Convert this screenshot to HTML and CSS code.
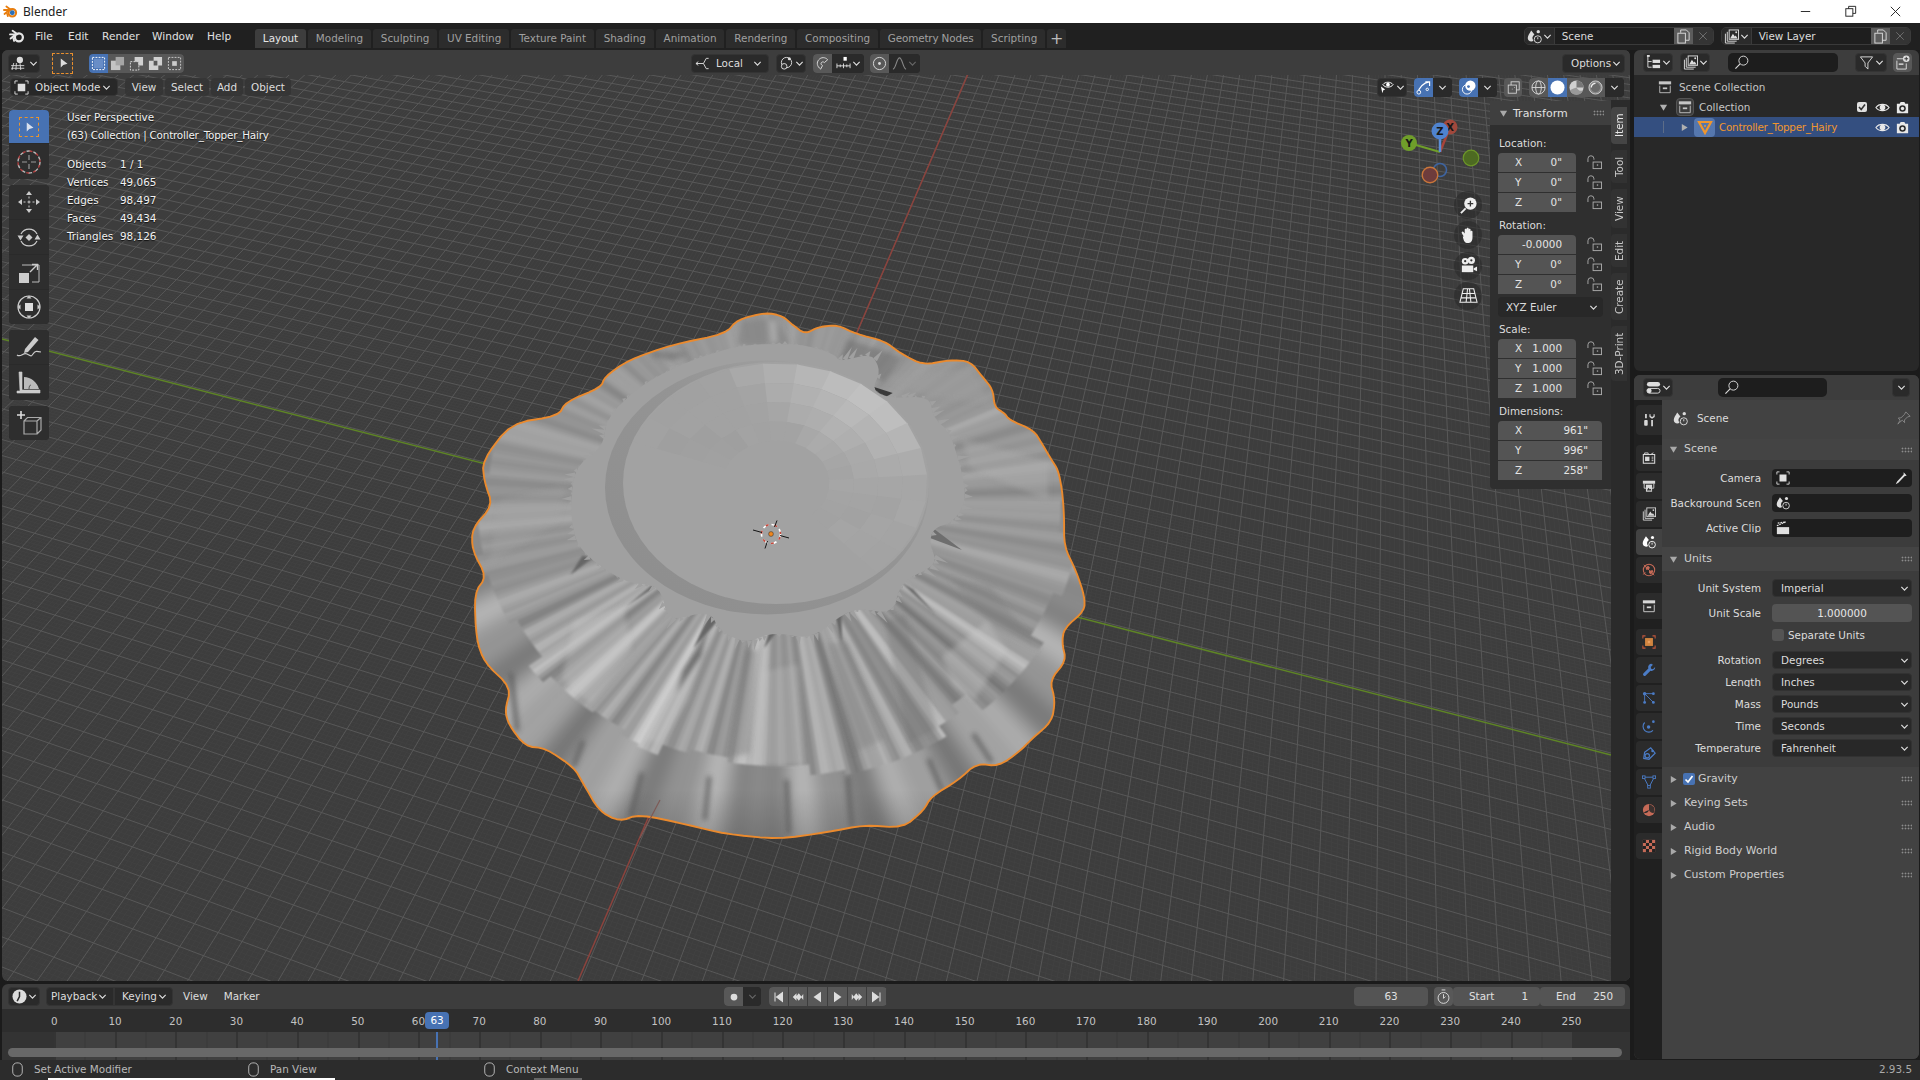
FILE: index.html
```html
<!DOCTYPE html>
<html lang="en">
<head>
<meta charset="utf-8">
<title>Blender</title>
<link rel="stylesheet" href="styles.css">
</head>
<body>
<svg class="defs" width="0" height="0">
  <symbol id="blend" viewBox="0 0 16 16"><circle cx="9.9" cy="9.3" r="4" fill="none" stroke="currentColor" stroke-width="2.3"/><path d="M1 6.4h6.2M3.6 2.7l5 3.6M1.6 10.6l4.4-3.6M4.5 10.5l.6 2.4" fill="none" stroke="currentColor" stroke-width="1.9" stroke-linecap="round"/></symbol>
  <symbol id="chev" viewBox="0 0 10 10"><path d="M1.5 3.2L5 6.8l3.5-3.6" fill="none" stroke="currentColor" stroke-width="1.3"/></symbol>
  <symbol id="trid" viewBox="0 0 10 10"><path d="M1 2h8L5 8.5z" fill="currentColor"/></symbol>
  <symbol id="trir" viewBox="0 0 10 10"><path d="M2 1v8l6.5-4z" fill="currentColor"/></symbol>
  <symbol id="view3d" viewBox="0 0 20 16"><path d="M1 11h15M1 14h15M4 8l-2 8M11 7l1 9M7 8l-.5 8" fill="none" stroke="currentColor"/><circle cx="11" cy="4.5" r="3.6" fill="currentColor"/></symbol>
  <symbol id="arrow" viewBox="0 0 16 16"><path d="M5 2v12l3.4-3.2L14 9z" fill="currentColor"/></symbol>
  <symbol id="objm" viewBox="0 0 16 16"><path d="M1 4V1h3M12 1h3v3M15 12v3h-3M4 15H1v-3" fill="none" stroke="currentColor"/><rect x="4" y="4" width="8" height="8" fill="currentColor"/></symbol>
  <symbol id="sel1" viewBox="0 0 16 16"><rect x="1.5" y="1.5" width="13" height="13" fill="none" stroke="#fff" stroke-dasharray="2 1.3"/><rect x="3" y="3" width="10" height="10" fill="#8aa8dc" opacity=".5"/></symbol>
  <symbol id="sel2" viewBox="0 0 16 16"><rect x="1" y="5" width="10" height="10" fill="#c4c4c4"/><rect x="6" y="1" width="9" height="9" fill="#a5a5a5"/></symbol>
  <symbol id="sel3" viewBox="0 0 16 16"><rect x="1.5" y="6" width="9" height="9" fill="none" stroke="#ddd" stroke-dasharray="2 1.3"/><path d="M6 1h9v9h-5V6H6z" fill="#d0d0d0"/></symbol>
  <symbol id="sel4" viewBox="0 0 16 16"><path d="M1 5h5v5h5v5H1zM6 1h9v9h-5V5H6z" fill="#d0d0d0"/><rect x="6.5" y="5.5" width="3.6" height="3.6" fill="none"/></symbol>
  <symbol id="sel5" viewBox="0 0 16 16"><rect x="1.5" y="1.5" width="13" height="13" fill="none" stroke="#ccc" stroke-dasharray="2 1.3"/><rect x="5.5" y="5.5" width="5" height="5" fill="#ccc"/></symbol>
  <symbol id="orient" viewBox="0 0 16 16"><path d="M1 8h8M1 8l2.5-2M1 8l2.5 2M9 8l3-5.5h2.5M9 8l3 5.5h2.5" fill="none" stroke="currentColor"/></symbol>
  <symbol id="pivot" viewBox="0 0 16 16"><circle cx="8" cy="7" r="5.5" fill="none" stroke="currentColor"/><circle cx="5.5" cy="11" r="3" fill="#333" stroke="currentColor"/><circle cx="11" cy="3" r="1.6" fill="currentColor"/></symbol>
  <symbol id="magnet" viewBox="0 0 16 16"><path d="M6 14C2 11 1.500 7 4 4s7-3 9.500 0L10 7C9 6 7.500 6 6.800 7c-.8 1-.3 2.500 1.200 3.200z" fill="none" stroke="currentColor"/></symbol>
  <symbol id="snapinc" viewBox="0 0 16 16"><rect x="8" y="1" width="3.500" height="4" fill="#fff"/><path d="M1 8v5M1 10.500h14M4.500 9v3M8 8v5M11.500 9v3M15 8v5" fill="none" stroke="currentColor"/></symbol>
  <symbol id="prop" viewBox="0 0 16 16"><circle cx="8" cy="8" r="6.500" fill="none" stroke="currentColor"/><circle cx="8" cy="8" r="1.500" fill="currentColor"/></symbol>
  <symbol id="fall" viewBox="0 0 16 16"><path d="M1 14c3 0 4-12 7-12s4 12 7 12" fill="none" stroke="currentColor" stroke-width="1.100"/></symbol>
  <symbol id="viseye" viewBox="0 0 16 16"><path d="M3 5c2.500-3.500 8.500-3.500 11 0-2.500 3.500-8.500 3.500-11 0z" fill="none" stroke="#fff"/><circle cx="8.500" cy="5" r="2" fill="#fff"/><path d="M1 7l4.500 3-2 .8-1 3.200z" fill="#fff"/></symbol>
  <symbol id="gizmoi" viewBox="0 0 16 16"><path d="M2 14C3 8 8 3 14 2M10 2h4.500V6.500" fill="none" stroke="#fff" stroke-width="1.200"/><circle cx="3" cy="13" r="2" fill="#4772b3" stroke="#fff"/><circle cx="12" cy="10" r="1.300" fill="none" stroke="#fff"/></symbol>
  <symbol id="overl" viewBox="0 0 16 16"><circle cx="6.500" cy="10" r="5" fill="none" stroke="#fff"/><circle cx="10" cy="6" r="5.500" fill="#fff"/><circle cx="8" cy="7" r="1.500" fill="#4772b3"/></symbol>
  <symbol id="xray" viewBox="0 0 16 16"><rect x="5" y="1" width="10" height="10" fill="none" stroke="#ddd"/><rect x="1.500" y="5" width="10" height="10" fill="#555" stroke="#ddd"/><path d="M6 10h.8M9 8h.8" stroke="#ddd"/></symbol>
  <symbol id="wire" viewBox="0 0 16 16"><circle cx="8" cy="8" r="7" fill="none" stroke="#d5d5d5"/><ellipse cx="8" cy="8" rx="3" ry="7" fill="none" stroke="#d5d5d5"/><path d="M1 8h14" stroke="#d5d5d5"/></symbol>
  <symbol id="solid" viewBox="0 0 16 16"><circle cx="8" cy="8" r="7.500" fill="#fff"/></symbol>
  <symbol id="mat" viewBox="0 0 16 16"><circle cx="8" cy="8" r="7.500" fill="#d0d0d0"/><path d="M8 8V.5A7.500 7.500 0 0 1 15.500 8z" fill="#777"/><path d="M1 11c3-2 5-2 7-3 2 4 5 4 7 3a7.500 7.500 0 0 1-14 0z" fill="#999"/></symbol>
  <symbol id="rend" viewBox="0 0 16 16"><circle cx="8" cy="8" r="7" fill="#8a8a8a" stroke="#d0d0d0"/><circle cx="8" cy="8" r="5" fill="#6a6a6a"/><path d="M3.500 8A4.500 4.500 0 0 1 8 3.500" fill="none" stroke="#eee" stroke-width="1.300"/></symbol>
  <symbol id="scene" viewBox="0 0 16 16"><path d="M4.500 1.500C3 4.500 .8 6.800 .8 9.500c0 2.300 1.700 3.800 3.900 3.800.8 0 1.600-.2 2.200-.7a5 5 0 0 1 1-6.800z" fill="currentColor"/><circle cx="12" cy="2.800" r="1.800" fill="currentColor"/><circle cx="11.500" cy="11" r="3.800" fill="none" stroke="currentColor"/><path d="M11.500 11V8.800" stroke="currentColor"/></symbol>
  <symbol id="vlayer" viewBox="0 0 16 16"><path d="M1.500 5v10h10M3.500 3v10h10" fill="none" stroke="currentColor"/><rect x="5.500" y="1" width="10" height="10" fill="none" stroke="currentColor"/><path d="M6.500 10l3-5 2 3 1-1 2 3z" fill="currentColor"/><circle cx="13" cy="3.500" r="1" fill="currentColor"/></symbol>
  <symbol id="copy" viewBox="0 0 16 16"><path d="M5 4V1h6l3 3v8h-4" fill="none" stroke="currentColor"/><rect x="2" y="4.500" width="8" height="10.500" fill="none" stroke="currentColor"/></symbol>
  <symbol id="xx" viewBox="0 0 16 16"><path d="M3 3l10 10M13 3L3 13" stroke="currentColor" stroke-width="1.100"/></symbol>
  <symbol id="outl" viewBox="0 0 16 16"><path d="M2 1v12h4M2 7h4" fill="none" stroke="currentColor"/><rect x="7" y="5" width="8" height="3.500" fill="currentColor"/><rect x="7" y="10.500" width="8" height="3.500" fill="currentColor"/><rect x="1" y="0" width="3" height="2" fill="currentColor"/></symbol>
  <symbol id="filter" viewBox="0 0 16 16"><path d="M1.500 2h13L9.500 8.500V15l-3-3V8.500z" fill="none" stroke="currentColor"/></symbol>
  <symbol id="newcol" viewBox="0 0 16 16"><path d="M2 4h7M2 6v9h10V9" fill="none" stroke="currentColor"/><rect x="4" y="9" width="5" height="1.500" fill="currentColor"/><circle cx="12" cy="4" r="3.500" fill="currentColor"/><path d="M12 2v4M10 4h4" stroke="#333"/></symbol>
  <symbol id="search" viewBox="0 0 16 16"><circle cx="10" cy="6" r="4.800" fill="none" stroke="currentColor"/><path d="M6.500 9.500L1.500 14.500" stroke="currentColor" stroke-width="1.200"/></symbol>
  <symbol id="coll" viewBox="0 0 16 16"><rect x="1" y="1.500" width="14" height="3.500" fill="currentColor"/><path d="M2 6.500v8h12v-8" fill="none" stroke="currentColor"/><rect x="5.500" y="8.500" width="5" height="2" fill="currentColor"/></symbol>
  <symbol id="eye" viewBox="0 0 16 16"><path d="M1 8c3-4.500 11-4.500 14 0-3 4.500-11 4.500-14 0z" fill="none" stroke="currentColor" stroke-width="1.200"/><circle cx="8" cy="8" r="3" fill="currentColor"/></symbol>
  <symbol id="cam" viewBox="0 0 16 16"><path d="M2 4h3l1-2h4l1 2h3v10H2z" fill="currentColor"/><circle cx="8" cy="9" r="3.500" fill="#2b2b2b"/><circle cx="8" cy="9" r="1.800" fill="currentColor"/></symbol>
  <symbol id="meshic" viewBox="0 0 16 16"><path d="M2 3h12L8 14z" fill="none" stroke="#f0962e" stroke-width="2.200"/><circle cx="8" cy="7" r="1" fill="#f0962e"/></symbol>
  <symbol id="lock" viewBox="0 0 16 16"><path d="M1 7.500V4a3.200 3.200 0 0 1 6.400 0v1" fill="none" stroke="currentColor"/><path d="M1 6h0" stroke="currentColor"/><rect x="6.500" y="7.500" width="9" height="7" fill="none" stroke="currentColor"/><rect x="10.500" y="10" width="1.400" height="1.400" fill="currentColor"/></symbol>
  <symbol id="zoom" viewBox="0 0 20 20"><circle cx="12" cy="8" r="6.500" fill="currentColor"/><path d="M12 5v6M9 8h6" stroke="#333" stroke-width="1.400"/><path d="M7 13L2 18" stroke="currentColor" stroke-width="2"/></symbol>
  <symbol id="hand" viewBox="0 0 20 20"><path d="M5 11L3 7.500c-.8-1.400 1-2.400 2-1l1 1.500V4c0-1.500 2-1.500 2 0V3c0-1.500 2.200-1.500 2.200 0v1c0-1.500 2-1.500 2 0v2c0-1.400 2-1.400 2 0v6c0 4-2 6-5 6s-4.200-2-5.200-7z" fill="currentColor"/></symbol>
  <symbol id="camv" viewBox="0 0 20 20"><circle cx="6.500" cy="5.500" r="3.500" fill="currentColor"/><circle cx="13" cy="4.500" r="3.800" fill="currentColor"/><circle cx="6.500" cy="5.500" r="1.200" fill="#333"/><circle cx="13" cy="4.500" r="1.200" fill="#333"/><rect x="3" y="10" width="12" height="7" fill="currentColor"/><path d="M15.500 13l3.500-2v5l-3.500-1.500z" fill="currentColor"/></symbol>
  <symbol id="gridv" viewBox="0 0 20 20"><path d="M4.500 3h11L19 17H1zM9 3l-1.500 14M11 3l1.500 14M3.300 8h13.400M2.200 12.500h15.600" fill="none" stroke="currentColor" stroke-width="1.100"/></symbol>
  <symbol id="t-cursor" viewBox="0 0 26 26"><circle cx="13" cy="13" r="11" fill="none" stroke="#bbb" stroke-width="1.400" stroke-dasharray="4 3"/><circle cx="13" cy="13" r="11" fill="none" stroke="#b34040" stroke-width="1.400" stroke-dasharray="3 4" stroke-dashoffset="4"/><path d="M13 6v5M13 15v5M6 13h5M15 13h5" stroke="#999" stroke-width="1.200"/></symbol>
  <symbol id="t-move" viewBox="0 0 26 26"><path d="M13 2l3 4h-6zM13 24l3-4h-6zM2 13l4-3v6zM24 13l-4-3v6z" fill="#ccc"/><path d="M11.500 13h3M13 11.500v3" stroke="#ccc"/><path d="M13 7.500v2M13 16.500v2M7.500 13h2M16.500 13h2" stroke="#ccc"/></symbol>
  <symbol id="t-rot" viewBox="0 0 26 26"><path d="M5 10a9 9 0 0 1 16 0M5 17a9 9 0 0 0 16 0" fill="none" stroke="#ccc" stroke-width="1.200"/><path d="M1.500 11.500h6l-3 5zM24.500 15.500h-6l3-5z" fill="#ccc"/><path d="M13 10l3.500 3.500L13 17l-3.500-3.500z" fill="#ccc"/></symbol>
  <symbol id="t-scale" viewBox="0 0 26 26"><path d="M6 6h17v17h-7" fill="none" stroke="#bbb"/><rect x="3" y="14" width="10" height="10" fill="#ccc"/><path d="M14 13l7-7M16 5.500h5.500V11" fill="none" stroke="#ccc" stroke-width="1.400"/></symbol>
  <symbol id="t-xf" viewBox="0 0 26 26"><circle cx="13" cy="13" r="11" fill="none" stroke="#ccc" stroke-width="1.200"/><rect x="9" y="9" width="8" height="8" fill="#ddd"/><path d="M13 1.500l2.500 3h-5zM13 24.500l2.500-3h-5zM1.500 13l3-2.500v5zM24.500 13l-3-2.500v5z" fill="#ccc"/></symbol>
  <symbol id="t-ann" viewBox="0 0 26 26"><path d="M9 15L19 3l3.500 3L12 18l-4 1z" fill="#ccc"/><path d="M1 21c4 3 6-3 10-1s4 3 6 0 3-3 8-2" fill="none" stroke="#ccc" stroke-width="1.200"/></symbol>
  <symbol id="t-meas" viewBox="0 0 26 26"><path d="M3 2h3v18h18v3H1v-2h3zM4 5h2M4 9h2M4 13h2M4 17h2" fill="#ccc" stroke="#ccc" stroke-width=".600"/><path d="M8 7c7 0 13 5 15 12H8z" fill="#bbb"/><path d="M13 19c0-3 1-4 2-4" fill="none" stroke="#555"/></symbol>
  <symbol id="t-cube" viewBox="0 0 26 26"><path d="M8 11h13v13H8zM8 11l3.500-3.500h13.500V20L21 24M21 11l4-3.500" fill="none" stroke="#aaa" stroke-width="1.200"/><path d="M5 1v8M1 5h8" stroke="#ddd" stroke-width="1.600"/></symbol>
  <symbol id="p-tool" viewBox="0 0 16 16"><rect x="2.500" y="8" width="4" height="6.500" rx="1" fill="currentColor"/><path d="M4.500 1v5M11.500 8v7" stroke="currentColor" stroke-width="2"/><path d="M8.500 1.500v3l3 2 3-2v-3l-1.300 0v2l-1.700 1-1.700-1v-2z" fill="currentColor"/></symbol>
  <symbol id="p-render" viewBox="0 0 16 16"><rect x="1.500" y="4" width="13" height="10" fill="none" stroke="currentColor" stroke-width="1.200"/><path d="M3 4V2.200h4V4M10 4l3-2" fill="none" stroke="currentColor"/><rect x="3.500" y="6.500" width="5" height="5" fill="currentColor"/><path d="M11 7h2M11 9h2M11 11h2" stroke="currentColor"/></symbol>
  <symbol id="p-out" viewBox="0 0 16 16"><path d="M1 2h14v3.500H1z" fill="currentColor"/><path d="M2.500 5.500v5H5M13.500 5.500v5H11" stroke="currentColor" fill="none"/><rect x="4.500" y="6.500" width="7" height="8" fill="currentColor"/><path d="M5.500 13l2-3 1.500 2 1-1 .8 2z" fill="#2b2b2b"/></symbol>
  <symbol id="p-world" viewBox="0 0 16 16"><circle cx="8" cy="8" r="6.500" fill="none" stroke="currentColor" stroke-width="1.200"/><path d="M4 5l3-2 2 2-1 2-3 1zM8 9l4-1 1 2-3 3-2-2z" fill="currentColor"/><path d="M2 2l12 12M1 13l3-2" stroke="currentColor"/></symbol>
  <symbol id="p-obj" viewBox="0 0 16 16"><path d="M1 4V1h3M12 1h3v3M15 12v3h-3M4 15H1v-3" fill="none" stroke="#c2573d" stroke-width="1.200"/><rect x="3.500" y="3.500" width="9" height="9" fill="#d28540"/><circle cx="8" cy="8" r="1.500" fill="#e8a060"/></symbol>
  <symbol id="p-mod" viewBox="0 0 16 16"><path d="M11 1a4 4 0 0 0-3.800 5.300L1.500 12a1.800 1.800 0 0 0 2.500 2.500l5.700-5.700A4 4 0 0 0 15 4.500L12.500 7l-2-.5-.5-2L12.500 2z" fill="currentColor"/></symbol>
  <symbol id="p-part" viewBox="0 0 16 16"><path d="M3 3v9M3 3l10 10M3 3h9" stroke="currentColor" fill="none"/><circle cx="3" cy="3" r="2" fill="currentColor"/><circle cx="3" cy="13" r="1.600" fill="currentColor"/><circle cx="13" cy="3" r="1.600" fill="currentColor"/><circle cx="13" cy="13" r="1.600" fill="currentColor"/></symbol>
  <symbol id="p-phys" viewBox="0 0 16 16"><path d="M3 4a6.500 6.500 0 1 0 9.500 9" fill="none" stroke="currentColor" stroke-width="1.300"/><circle cx="7.500" cy="9" r="2" fill="currentColor"/><circle cx="13" cy="3" r="1.500" fill="currentColor"/></symbol>
  <symbol id="p-cons" viewBox="0 0 16 16"><path d="M3 6l7-5 5 6-7 7-6-1z" fill="none" stroke="currentColor" stroke-width="1.400"/><circle cx="6" cy="10" r="2.500" fill="none" stroke="currentColor" stroke-width="1.300"/><circle cx="12" cy="4.500" r="1.400" fill="currentColor"/></symbol>
  <symbol id="p-data" viewBox="0 0 16 16"><path d="M2 2.500h12L8 14z" fill="none" stroke="currentColor" stroke-width="1.100"/><rect x=".5" y="1" width="3" height="3" fill="#2b2b2b" stroke="currentColor"/><rect x="12.500" y="1" width="3" height="3" fill="#2b2b2b" stroke="currentColor"/><rect x="6.500" y="12" width="3" height="3" fill="#2b2b2b" stroke="currentColor"/></symbol>
  <symbol id="p-mat" viewBox="0 0 16 16"><circle cx="8" cy="8" r="7" fill="currentColor"/><path d="M8 1.500V8c2 4 5 4 6.500 2.500L14 5 11 2.500z" fill="#2b2b2b" opacity=".9"/><path d="M2 11c3-2 4-2 6-3-1 3-3 4-6 3z" fill="#2b2b2b"/></symbol>
  <symbol id="p-tex" viewBox="0 0 16 16"><rect x="1" y="1" width="14" height="14" fill="currentColor"/><path d="M1 1h3.500v3.500H1zM8 1h3.500v3.500H8zM4.500 4.500H8V8H4.500zM11.500 4.500H15V8h-3.500zM1 8h3.500v3.500H1zM8 8h3.500v3.500H8zM4.500 11.500H8V15H4.500zM11.500 11.500H15V15h-3.500z" fill="#222"/></symbol>
  <symbol id="pin" viewBox="0 0 16 16"><path d="M10 1l5 5-3 .8-3.500 3.500.2 3L6 10.500 3 13l-2 2 2.500-4.500L1.500 8l3-.2L8.500 4z" fill="none" stroke="currentColor"/></symbol>
  <symbol id="dropper" viewBox="0 0 16 16"><path d="M11 1.500l3.500 3.500-2.500 1 -1 1-6 6.500-3 1.500 1.500-3L10 5l1-1z" fill="currentColor"/></symbol>
  <symbol id="clip" viewBox="0 0 16 16"><path d="M1 5.500L11 1M2 2.500l9-1.500" stroke="currentColor" fill="none" stroke-width="1.400" stroke-dasharray="2 1"/><rect x="1" y="7" width="14" height="8" fill="currentColor"/></symbol>
  <symbol id="clock" viewBox="0 0 16 16"><circle cx="8" cy="8" r="7.500" fill="currentColor"/><path d="M8 3v5l-2.500 5" fill="none" stroke="#2b2b2b" stroke-width="1.600"/></symbol>
  <symbol id="watch" viewBox="0 0 16 16"><circle cx="8" cy="9.500" r="5.800" fill="none" stroke="currentColor"/><path d="M6 1h4M8 5.500V10l2-2" fill="none" stroke="currentColor"/></symbol>
  <symbol id="mouse" viewBox="0 0 12 16"><rect x=".8" y=".8" width="10.400" height="14.400" rx="4.500" fill="none" stroke="currentColor"/></symbol>
  <symbol id="rec" viewBox="0 0 16 16"><circle cx="8" cy="8" r="4.500" fill="currentColor"/></symbol>
  <symbol id="jstart" viewBox="0 0 16 16"><path d="M4 2v12M14 2v12L6 8z" stroke="currentColor" stroke-width="1.400" fill="currentColor"/></symbol>
  <symbol id="kprev" viewBox="0 0 16 16"><path d="M6 3v10L1 8zM9 3l4 5-4 5-4-5z" fill="currentColor"/><path d="M13 3l2 5-2 5" fill="none"/><path d="M15 4v8l-3-4z" fill="currentColor"/></symbol>
  <symbol id="pback" viewBox="0 0 16 16"><path d="M12 1v14L2 8z" fill="currentColor"/></symbol>
  <symbol id="pfwd" viewBox="0 0 16 16"><path d="M4 1v14l10-7z" fill="currentColor"/></symbol>
  <symbol id="knext" viewBox="0 0 16 16"><path d="M10 3v10l5-5zM7 3L3 8l4 5 4-5z" fill="currentColor"/><path d="M1 4v8l3-4z" fill="currentColor"/></symbol>
  <symbol id="jend" viewBox="0 0 16 16"><path d="M12 2v12M2 2v12l8-6z" stroke="currentColor" stroke-width="1.400" fill="currentColor"/></symbol>
  <filter id="b1" x="-5%" y="-5%" width="110%" height="110%"><feGaussianBlur stdDeviation=".9"/></filter>
  <filter id="b3" x="-5%" y="-5%" width="110%" height="110%"><feGaussianBlur stdDeviation="4"/></filter>
  <filter id="b2" x="-5%" y="-5%" width="110%" height="110%"><feGaussianBlur stdDeviation="2.400"/></filter>
</svg>

<header class="titlebar">
  <svg class="tb-logo" viewBox="0 0 16 16"><use href="#blend"/><circle cx="9.900" cy="9.300" r="2.600" fill="#2a6fb8"/></svg>
  <span class="tb-name">Blender</span>
  <div class="tb-win">
    <svg class="w-btn" viewBox="0 0 16 16"><path d="M3 8h10" stroke="#222"/></svg>
    <svg class="w-btn" viewBox="0 0 16 16"><rect x="3" y="5" width="7.500" height="8" fill="none" stroke="#222"/><path d="M6 5V2.500h7.500V10H10.500" fill="none" stroke="#222"/></svg>
    <svg class="w-btn" viewBox="0 0 16 16"><path d="M3 3l10 10M13 3L3 13" stroke="#222"/></svg>
  </div>
</header>

<nav class="topbar">
  <svg class="tp-logo" viewBox="0 0 16 16"><use href="#blend"/></svg>
  <div class="menus"><span>File</span><span>Edit</span><span>Render</span><span>Window</span><span>Help</span></div>
  <div class="tabs">
    <span class="tab on">Layout</span><span class="tab">Modeling</span><span class="tab">Sculpting</span><span class="tab">UV Editing</span><span class="tab">Texture Paint</span><span class="tab">Shading</span><span class="tab">Animation</span><span class="tab">Rendering</span><span class="tab">Compositing</span><span class="tab t-geo">Geometry Nodes</span><span class="tab">Scripting</span><span class="tab plus">+</span>
  </div>
  <div class="selector sel-scene">
    <div class="sel-ic"><svg class="ic15"><use href="#scene"/></svg><svg class="ch"><use href="#chev"/></svg></div>
    <div class="sel-f">Scene</div>
    <div class="sel-c"><svg class="ic15"><use href="#copy"/></svg></div>
    <div class="sel-x"><svg class="ic12"><use href="#xx"/></svg></div>
  </div>
  <div class="selector sel-layer">
    <div class="sel-ic"><svg class="ic15"><use href="#vlayer"/></svg><svg class="ch"><use href="#chev"/></svg></div>
    <div class="sel-f">View Layer</div>
    <div class="sel-c"><svg class="ic15"><use href="#copy"/></svg></div>
    <div class="sel-x"><svg class="ic12"><use href="#xx"/></svg></div>
  </div>
</nav>

<main class="workspace">
  <div class="col-left">
    <section class="viewport">
      <svg class="scene3d" viewBox="2 50 1628 931">
        <defs>
          <linearGradient id="ringg" x1="0" y1="1" x2="1" y2="0"><stop offset="0" stop-color="#8d8d8d"/><stop offset=".55" stop-color="#949494"/><stop offset="1" stop-color="#a8a8a8"/></linearGradient>
          <linearGradient id="shade" gradientUnits="userSpaceOnUse" x1="0" y1="790" x2="0" y2="842"><stop offset="0" stop-color="#3c3c3c" stop-opacity="0"/><stop offset="1" stop-color="#3c3c3c" stop-opacity=".28"/></linearGradient>
          <clipPath id="outclip"><path id="outclipp"/></clipPath>
        </defs>
        <path id="gridm" fill="none" stroke="#414141" stroke-width="1"/>
        <path id="grid" fill="none" stroke="#585858" stroke-width="1"/>
        <path d="M2 339L1611 755" stroke="#5e8426" stroke-width="1.500"/>
        <path d="M968 74L578 981" stroke="#8c433d" stroke-width="1.500"/>
        <g id="mesh3d"></g>
      </svg>

      <div class="vp-head">
        <div class="btn w32"><svg class="ic18"><use href="#view3d"/></svg><svg class="ch"><use href="#chev"/></svg></div>
        <div class="dash-tool"><svg class="ic12"><use href="#arrow"/></svg></div>
        <div class="seg w95">
          <span class="sg on"><svg class="ic15"><use href="#sel1"/></svg></span><span class="sg g"><svg class="ic15"><use href="#sel2"/></svg></span><span class="sg g"><svg class="ic15"><use href="#sel3"/></svg></span><span class="sg g"><svg class="ic15"><use href="#sel4"/></svg></span><span class="sg g"><svg class="ic15"><use href="#sel5"/></svg></span>
        </div>
        <div class="btn w78 m-local"><svg class="ic15"><use href="#orient"/></svg><span class="lbl">Local</span><svg class="ch r"><use href="#chev"/></svg></div>
        <div class="btn w30 m7"><svg class="ic15"><use href="#pivot"/></svg><svg class="ch"><use href="#chev"/></svg></div>
        <div class="seg w51 m7"><span class="sg g"><svg class="ic15"><use href="#magnet"/></svg></span><span class="sg dk grow"><svg class="ic15"><use href="#snapinc"/></svg><svg class="ch"><use href="#chev"/></svg></span></div>
        <div class="seg w50 m6"><span class="sg g"><svg class="ic15"><use href="#prop"/></svg></span><span class="sg dk grow dim"><svg class="ic15"><use href="#fall"/></svg><svg class="ch"><use href="#chev"/></svg></span></div>
        <div class="btn w63 m-opt"><span class="lbl">Options</span><svg class="ch"><use href="#chev"/></svg></div>
      </div>

      <div class="vp-head2">
        <div class="btn w108"><svg class="ic15"><use href="#objm"/></svg><span class="lbl">Object Mode</span><svg class="ch r"><use href="#chev"/></svg></div>
        <div class="mbtn w38 m7">View</div><div class="mbtn w44">Select</div><div class="mbtn w32">Add</div><div class="mbtn w46">Object</div>
        <div class="btn w30 m-auto"><svg class="ic15"><use href="#viseye"/></svg><svg class="ch"><use href="#chev"/></svg></div>
        <div class="seg w38 m7"><span class="sg on"><svg class="ic15"><use href="#gizmoi"/></svg></span><span class="sg dk grow"><svg class="ch"><use href="#chev"/></svg></span></div>
        <div class="seg w38 m7"><span class="sg on"><svg class="ic15"><use href="#overl"/></svg></span><span class="sg dk grow"><svg class="ch"><use href="#chev"/></svg></span></div>
        <div class="seg w18 m7"><span class="sg g grow"><svg class="ic13"><use href="#xray"/></svg></span></div>
        <div class="seg w95 m7"><span class="sg g"><svg class="ic15"><use href="#wire"/></svg></span><span class="sg on"><svg class="ic15"><use href="#solid"/></svg></span><span class="sg g"><svg class="ic15"><use href="#mat"/></svg></span><span class="sg g"><svg class="ic15"><use href="#rend"/></svg></span><span class="sg dk grow"><svg class="ch"><use href="#chev"/></svg></span></div>
      </div>

      <div class="toolbar">
        <div class="tgroup">
          <div class="tool on t33"><div class="dash-big"><svg class="ic12"><use href="#arrow"/></svg></div></div>
          <div class="tool t35"><svg class="ic24"><use href="#t-cursor"/></svg></div>
        </div>
        <div class="tgroup">
          <div class="tool t34"><svg class="ic24"><use href="#t-move"/></svg></div>
          <div class="tool t34"><svg class="ic24"><use href="#t-rot"/></svg></div>
          <div class="tool t34"><svg class="ic24"><use href="#t-scale"/></svg></div>
          <div class="tool t34"><svg class="ic24"><use href="#t-xf"/></svg></div>
        </div>
        <div class="tgroup">
          <div class="tool t34"><svg class="ic24"><use href="#t-ann"/></svg></div>
          <div class="tool t35"><svg class="ic24"><use href="#t-meas"/></svg></div>
        </div>
        <div class="tgroup">
          <div class="tool t34"><svg class="ic24"><use href="#t-cube"/></svg></div>
        </div>
      </div>

      <div class="stats">
        <div>User Perspective</div>
        <div class="st-obj">(63) Collection | Controller_Topper_Hairy</div>
        <dl class="stat-t">
          <dt>Objects</dt><dd>1 / 1</dd>
          <dt>Vertices</dt><dd>49,065</dd>
          <dt>Edges</dt><dd>98,497</dd>
          <dt>Faces</dt><dd>49,434</dd>
          <dt>Triangles</dt><dd>98,126</dd>
        </dl>
      </div>

      <svg class="gizmo" viewBox="1395 115 95 75">
        <circle cx="1440" cy="170" r="6.500" fill="none" stroke="#3e64a0" stroke-width="1.600"/>
        <circle cx="1430" cy="175" r="7.800" fill="#6e3c3c" stroke="#c8763a" stroke-width="1.400"/>
        <circle cx="1471" cy="158" r="7.800" fill="#4d6a22" stroke="#6c9628" stroke-width="1.200"/>
        <path d="M1440 152L1409 143" stroke="#6f9e2a" stroke-width="2"/>
        <path d="M1440 152L1450 127" stroke="#a8443a" stroke-width="2.500"/>
        <circle cx="1450" cy="127" r="7.500" fill="#a0483c"/>
        <text x="1450" y="130.500" class="g-t">X</text>
        <path d="M1440 152V132" stroke="#5c8fd8" stroke-width="2.500"/>
        <circle cx="1409" cy="143" r="8" fill="#6f9e2a"/>
        <text x="1409" y="147" class="g-t">Y</text>
        <circle cx="1440" cy="131" r="8.500" fill="#4f83cf"/>
        <text x="1440" y="135" class="g-t">Z</text>
      </svg>
      <div class="navbtns">
        <div class="nav"><svg class="ic17"><use href="#zoom"/></svg></div>
        <div class="nav"><svg class="ic17"><use href="#hand"/></svg></div>
        <div class="nav"><svg class="ic17"><use href="#camv"/></svg></div>
        <div class="nav"><svg class="ic17"><use href="#gridv"/></svg></div>
      </div>

      <aside class="side-tabs">
        <span class="stab on h37">Item</span><span class="stab h33">Tool</span><span class="stab h39">View</span><span class="stab h33">Edit</span><span class="stab h47">Create</span><span class="stab h55">3D-Print</span>
      </aside>

      <aside class="xform">
        <div class="xf-head"><svg class="tri"><use href="#trid"/></svg><span>Transform</span><i class="grip"></i></div>
        <div class="xf-body">
          <div class="xf-l first">Location:</div>
          <div class="xf-r"><div class="xf-f"><b>X</b><em>0"</em></div><svg class="lock"><use href="#lock"/></svg></div>
          <div class="xf-r"><div class="xf-f"><b>Y</b><em>0"</em></div><svg class="lock"><use href="#lock"/></svg></div>
          <div class="xf-r"><div class="xf-f"><b>Z</b><em>0"</em></div><svg class="lock"><use href="#lock"/></svg></div>
          <div class="xf-l">Rotation:</div>
          <div class="xf-r"><div class="xf-f"><b></b><em>-0.0000</em></div><svg class="lock"><use href="#lock"/></svg></div>
          <div class="xf-r"><div class="xf-f"><b>Y</b><em>0°</em></div><svg class="lock"><use href="#lock"/></svg></div>
          <div class="xf-r"><div class="xf-f"><b>Z</b><em>0°</em></div><svg class="lock"><use href="#lock"/></svg></div>
          <div class="xf-dd"><span>XYZ Euler</span><svg class="ch"><use href="#chev"/></svg></div>
          <div class="xf-l l-scale">Scale:</div>
          <div class="xf-r"><div class="xf-f"><b>X</b><em>1.000</em></div><svg class="lock"><use href="#lock"/></svg></div>
          <div class="xf-r"><div class="xf-f"><b>Y</b><em>1.000</em></div><svg class="lock"><use href="#lock"/></svg></div>
          <div class="xf-r"><div class="xf-f"><b>Z</b><em>1.000</em></div><svg class="lock"><use href="#lock"/></svg></div>
          <div class="xf-l">Dimensions:</div>
          <div class="xf-r wide"><div class="xf-f"><b>X</b><em>961"</em></div></div>
          <div class="xf-r wide"><div class="xf-f"><b>Y</b><em>996"</em></div></div>
          <div class="xf-r wide"><div class="xf-f"><b>Z</b><em>258"</em></div></div>
        </div>
      </aside>
    </section>

    <section class="timeline">
      <div class="tl-head">
        <div class="tl-left">
          <div class="btn w32"><svg class="ic15"><use href="#clock"/></svg><svg class="ch"><use href="#chev"/></svg></div>
          <div class="btn w68 m6 sq-r"><span class="lbl">Playback</span><svg class="ch r"><use href="#chev"/></svg></div>
          <div class="btn w59 sq-l"><span class="lbl">Keying</span><svg class="ch r"><use href="#chev"/></svg></div>
          <span class="tl-menu m-view">View</span>
          <span class="tl-menu m-marker">Marker</span>
        </div>
        <div class="seg w37"><span class="sg g"><svg class="ic12"><use href="#rec"/></svg></span><span class="sg dk grow dim"><svg class="ch"><use href="#chev"/></svg></span></div>
        <div class="seg w118 m8 trans">
          <span class="sg g"><svg class="ic12"><use href="#jstart"/></svg></span><span class="sg g"><svg class="ic12"><use href="#kprev"/></svg></span><span class="sg g"><svg class="ic12"><use href="#pback"/></svg></span><span class="sg g"><svg class="ic12"><use href="#pfwd"/></svg></span><span class="sg g"><svg class="ic12"><use href="#knext"/></svg></span><span class="sg g"><svg class="ic12"><use href="#jend"/></svg></span>
        </div>
        <div class="tl-right">
          <div class="num w74">63</div>
          <div class="seg w19 m6"><span class="sg g grow"><svg class="ic15"><use href="#watch"/></svg></span></div>
          <div class="num w87 sq-r split"><span>Start</span><span>1</span></div>
          <div class="num w85 sq-l split"><span>End</span><span>250</span></div>
        </div>
      </div>
      <div class="tl-scrub">
        <span>0</span><span>10</span><span>20</span><span>30</span><span>40</span><span>50</span><span>60</span><span>70</span><span>80</span><span>90</span><span>100</span><span>110</span><span>120</span><span>130</span><span>140</span><span>150</span><span>160</span><span>170</span><span>180</span><span>190</span><span>200</span><span>210</span><span>220</span><span>230</span><span>240</span><span>250</span>
        <b class="tl-pill">63</b>
      </div>
      <div class="tl-body">
        <i class="tl-out left"></i><i class="tl-out right"></i>
        <i class="tl-head-line"></i>
        <div class="tl-scroll"></div>
      </div>
    </section>
  </div>

  <div class="col-right">
    <section class="outliner">
      <div class="ol-head">
        <div class="btn w30"><svg class="ic15"><use href="#outl"/></svg><svg class="ch"><use href="#chev"/></svg></div>
        <div class="btn w30 m7"><svg class="ic15"><use href="#vlayer"/></svg><svg class="ch"><use href="#chev"/></svg></div>
        <div class="srch ol-s"><svg class="ic15"><use href="#search"/></svg></div>
        <div class="btn w32 m17"><svg class="ic15"><use href="#filter"/></svg><svg class="ch"><use href="#chev"/></svg></div>
        <div class="btn w19 m6 lite"><svg class="ic15"><use href="#newcol"/></svg></div>
      </div>
      <div class="ol-body">
        <div class="ol-row r-scene"><svg class="ic14"><use href="#coll"/></svg><span>Scene Collection</span></div>
        <div class="ol-row r-coll"><svg class="tri2"><use href="#trid"/></svg><span class="icbox"><svg class="ic14"><use href="#coll"/></svg></span><span>Collection</span>
          <div class="ol-ctl"><i class="chk"><svg viewBox="0 0 10 10"><path d="M2 5l2.200 2.500L8 2.500" fill="none" stroke="#333" stroke-width="1.600"/></svg></i><svg class="ic15"><use href="#eye"/></svg><svg class="ic15"><use href="#cam"/></svg></div>
        </div>
        <div class="ol-row r-obj"><i class="vline"></i><svg class="tri2"><use href="#trir"/></svg><span class="icmesh"><svg class="ic16"><use href="#meshic"/></svg></span><span class="oname">Controller_Topper_Hairy</span>
          <div class="ol-ctl"><svg class="ic15"><use href="#eye"/></svg><svg class="ic15"><use href="#cam"/></svg></div>
        </div>
      </div>
    </section>

    <section class="props">
      <div class="pr-head">
        <div class="btn w30 pr-ed"><svg class="ic15" viewBox="0 0 16 16"><rect x="1" y="2" width="14" height="5" rx="2.500" fill="#ddd"/><rect x="1" y="9" width="14" height="5" rx="2.500" fill="none" stroke="#ddd"/><circle cx="3.500" cy="11.500" r="2.500" fill="#ddd"/></svg><svg class="ch"><use href="#chev"/></svg></div>
        <div class="srch pr-s"><svg class="ic15"><use href="#search"/></svg></div>
        <div class="btn w18 pr-dd"><svg class="ch"><use href="#chev"/></svg></div>
      </div>
      <div class="pr-main">
        <nav class="pr-nav">
          <span class="ptab t30"><svg class="ic14"><use href="#p-tool"/></svg></span>
          <span class="ptab gap"><svg class="ic14"><use href="#p-render"/></svg></span>
          <span class="ptab"><svg class="ic14"><use href="#p-out"/></svg></span>
          <span class="ptab"><svg class="ic14"><use href="#vlayer"/></svg></span>
          <span class="ptab on"><svg class="ic14"><use href="#scene"/></svg></span>
          <span class="ptab red"><svg class="ic14"><use href="#p-world"/></svg></span>
          <span class="ptab gap"><svg class="ic14"><use href="#coll"/></svg></span>
          <span class="ptab gap"><svg class="ic14"><use href="#p-obj"/></svg></span>
          <span class="ptab blu"><svg class="ic14"><use href="#p-mod"/></svg></span>
          <span class="ptab blu"><svg class="ic14"><use href="#p-part"/></svg></span>
          <span class="ptab blu"><svg class="ic14"><use href="#p-phys"/></svg></span>
          <span class="ptab blu"><svg class="ic14"><use href="#p-cons"/></svg></span>
          <span class="ptab blu"><svg class="ic14"><use href="#p-data"/></svg></span>
          <span class="ptab red"><svg class="ic14"><use href="#p-mat"/></svg></span>
          <span class="ptab red gap"><svg class="ic14"><use href="#p-tex"/></svg></span>
        </nav>
        <div class="pr-content">
          <div class="ctx"><svg class="ic15"><use href="#scene"/></svg><span>Scene</span><svg class="ic14 pinic"><use href="#pin"/></svg></div>

          <div class="ph h21"><svg class="tri"><use href="#trid"/></svg><span>Scene</span><i class="grip"></i></div>
          <div class="pb pb-scene">
            <div class="row"><label>Camera</label><div class="fld"><svg class="ic14"><use href="#objm"/></svg><svg class="ic14 dp"><use href="#dropper"/></svg></div></div>
            <div class="row"><label>Background Scen</label><div class="fld"><svg class="ic14"><use href="#scene"/></svg></div></div>
            <div class="row"><label>Active Clip</label><div class="fld"><svg class="ic14"><use href="#clip"/></svg></div></div>
          </div>

          <div class="ph h24"><svg class="tri"><use href="#trid"/></svg><span>Units</span><i class="grip"></i></div>
          <div class="pb pb-units">
            <div class="row"><label>Unit System</label><div class="dd"><span>Imperial</span><svg class="ch"><use href="#chev"/></svg></div></div>
            <div class="row m8t"><label>Unit Scale</label><div class="nf">1.000000</div></div>
            <div class="row chkrow"><label></label><div class="cb"><i></i><span>Separate Units</span></div></div>
            <div class="row m10t"><label>Rotation</label><div class="dd"><span>Degrees</span><svg class="ch"><use href="#chev"/></svg></div></div>
            <div class="row m4t"><label>Length</label><div class="dd"><span>Inches</span><svg class="ch"><use href="#chev"/></svg></div></div>
            <div class="row m4t"><label>Mass</label><div class="dd"><span>Pounds</span><svg class="ch"><use href="#chev"/></svg></div></div>
            <div class="row m4t"><label>Time</label><div class="dd"><span>Seconds</span><svg class="ch"><use href="#chev"/></svg></div></div>
            <div class="row m4t"><label>Temperature</label><div class="dd"><span>Fahrenheit</span><svg class="ch"><use href="#chev"/></svg></div></div>
          </div>

          <div class="ph h24 closed"><svg class="tri"><use href="#trir"/></svg><i class="cbk"><svg viewBox="0 0 12 12"><path d="M2.500 6.500l2.500 2.500 4.500-6" fill="none" stroke="#fff" stroke-width="1.700"/></svg></i><span class="nt">Gravity</span><i class="grip"></i></div>
          <div class="ph h24 closed"><svg class="tri"><use href="#trir"/></svg><span>Keying Sets</span><i class="grip"></i></div>
          <div class="ph h24 closed"><svg class="tri"><use href="#trir"/></svg><span>Audio</span><i class="grip"></i></div>
          <div class="ph h24 closed"><svg class="tri"><use href="#trir"/></svg><span>Rigid Body World</span><i class="grip"></i></div>
          <div class="ph h24 closed"><svg class="tri"><use href="#trir"/></svg><span>Custom Properties</span><i class="grip"></i></div>
        </div>
      </div>
    </section>
  </div>
</main>

<footer class="status">
  <div class="st"><svg class="ms"><use href="#mouse"/></svg><span>Set Active Modifier</span></div>
  <div class="st"><svg class="ms"><use href="#mouse"/></svg><span>Pan View</span></div>
  <div class="st"><svg class="ms"><use href="#mouse"/></svg><span>Context Menu</span></div>
  <span class="ver">2.93.5</span>
  <i class="edge e1"></i><i class="edge e2"></i>
</footer>
<script src="app.js"></script>
</body>
</html>
```

FILE: styles.css
```css
*{box-sizing:border-box}
html,body{margin:0;padding:0}
body{width:1920px;height:1080px;overflow:hidden;background:#1b1b1b;font:10.4px/1 "DejaVu Sans",sans-serif;color:#dcdcdc;display:flex;flex-direction:column}
.defs{position:absolute}
svg{display:block;flex:none}
.ic12{width:12px;height:12px}.ic13{width:13px;height:13px}.ic14{width:14px;height:14px}.ic15{width:15px;height:15px}.ic16{width:16px;height:16px}.ic17{width:19px;height:19px}.ic18{width:18px;height:14px}.ic24{width:26px;height:26px}
.ch{width:9px;height:9px;color:#ddd}
.ch.r{margin-left:auto}

.titlebar{height:23px;background:#fff;display:flex;align-items:center;color:#222;flex:none}
.tb-logo{width:15px;height:15px;margin-left:3px;color:#e87d0d}
.tb-name{margin-left:5px;font:12px "Noto Sans",sans-serif;color:#222}
.tb-win{margin-left:auto;display:flex;gap:30px;margin-right:17px}
.w-btn{width:15px;height:15px}

.topbar{height:27px;background:#202020;display:flex;flex:none;position:relative}
.tp-logo{width:16px;height:16px;color:#e6e6e6;margin:5px 0 0 9px}
.menus{display:flex;margin-left:10px;height:26px;align-items:center;font-size:10.6px;color:#e0e0e0}
.menus span:nth-child(1){width:33px}.menus span:nth-child(2){width:34px}.menus span:nth-child(3){width:50px}.menus span:nth-child(4){width:55px}.menus span:nth-child(5){width:32px}
.tabs{display:flex;gap:2px;margin:6px 0 0 16px;height:19px}
.tab{display:flex;align-items:center;justify-content:center;height:19px;padding:0 7.850px;background:#2c2c2c;color:#a0a0a0;border-radius:3px 3px 0 0;white-space:nowrap}
.tab.t-geo{letter-spacing:-.15px}
.tab.on{background:#3d3d3d;color:#e6e6e6}
.tab.plus{width:19px;padding:0;font-size:16px;background:#2c2c2c;color:#bbb}
.selector{position:absolute;top:4px;height:18px;display:flex;border-radius:5px;background:#282828;border:1px solid #3a3a3a;overflow:hidden}
.sel-scene{left:1524px;width:190px}.sel-layer{left:1721px;width:190px}
.sel-ic{width:30px;display:flex;align-items:center;justify-content:center;gap:1px;background:#2b2b2b;border-right:1px solid #3a3a3a}
.sel-f{width:121px;background:#1e1e1e;padding:0 0 0 7px;display:flex;align-items:center;color:#dcdcdc}
.sel-c{width:19px;background:#5c5c5c;display:flex;align-items:center;justify-content:center}
.sel-x{width:20px;background:#343434;color:#777;display:flex;align-items:center;justify-content:center}

.workspace{flex:1;display:grid;grid-template-columns:1628px 285px;column-gap:4px;padding-left:2px;min-height:0}
.col-left{display:flex;flex-direction:column;gap:3px;min-height:0}
.col-right{display:flex;flex-direction:column;gap:4px;min-height:0}

.viewport{position:relative;height:931px;background:#3d3d3d;border-radius:6px;overflow:hidden;flex:none}
.scene3d{position:absolute;left:0;top:0;width:1628px;height:931px}
.vp-head{position:relative;height:25px;background:#3d3d3d;display:flex;align-items:center;padding:1px 0 0 6px}
.vp-head2{position:relative;height:25px;display:flex;align-items:center;padding:0 6px 1px 8px}

.btn{height:19px;display:flex;align-items:center;justify-content:center;gap:1px;background:#2a2a2a;border:1px solid #343434;border-radius:4px;color:#ddd;flex:none;padding:0 2px}
.btn .lbl{margin-left:5px}
.seg{height:19px;display:flex;border-radius:4px;overflow:hidden;flex:none;background:#2a2a2a}
.sg{width:19px;display:flex;align-items:center;justify-content:center;color:#ddd;flex:none;gap:1px}
.sg.on{background:#4772b3}.sg.g{background:#585858}.sg.dk{background:#2a2a2a}
.sg.grow{flex:1;width:auto}.sg.dim{color:#888}.sg.dim .ch{color:#666}
.w18{width:18px}.w19{width:19px}.w30{width:30px}.w32{width:32px}.w37{width:37px}.w38{width:38px}.w44{width:44px}.w46{width:46px}.w50{width:50px}.w51{width:51px}.w59{width:59px}.w63{width:63px}.w68{width:68px}.w74{width:74px}.w78{width:78px}.w85{width:85px}.w87{width:87px}.w95{width:95px}.w108{width:108px}.w118{width:118px}
.m6{margin-left:6px}.m7{margin-left:7px}.m8{margin-left:8px}.m17{margin-left:17px}.m-auto{margin-left:auto}
.m-local{margin-left:507px;justify-content:flex-start;padding:0 6px 0 3px}
.m-opt{margin-left:auto;margin-right:5px}
.dash-tool{width:21px;height:21px;margin-left:12px;border:1px dashed #e88f2e;display:flex;align-items:center;justify-content:center;color:#ddd}
.seg.w95{margin-left:16px}
.vp-head .seg.w95{margin-left:16px}
.vp-head2 .seg.w95{margin-left:7px}
.vp-head2 .w108{justify-content:flex-start;padding:0 6px 0 3px;height:18px;background:#282828}
.mbtn{height:18px;display:flex;align-items:center;justify-content:center;background:rgba(52,52,52,.9);border-radius:4px;color:#ddd;margin-right:2px;flex:none}
.mbtn.m7{margin-left:7px}

.toolbar{position:absolute;left:7px;top:60px;width:40px;display:flex;flex-direction:column;gap:6px}
.tgroup{display:flex;flex-direction:column;gap:1px;background:#2a2a2a;border-radius:4px;overflow:hidden}
.tool{display:flex;align-items:center;justify-content:center;background:#2e2e2e;position:relative}
.tool.on{background:#4772b3}
.t33{height:33px}.t34{height:34px}.t35{height:35px}
.dash-big{width:20px;height:20px;border:1.4px dashed #e8942e;display:flex;align-items:center;justify-content:center;color:#d8e0ee}

.stats{position:absolute;left:65px;top:58px;line-height:18px;color:#f2f2f2;text-shadow:0 1px 1px #111;white-space:nowrap}
.st-obj{letter-spacing:-.2px}
.stat-t{display:grid;grid-template-columns:53px auto;margin:11px 0 0}
.stat-t dd{margin:0}

.gizmo{position:absolute;left:1393px;top:65px;width:95px;height:75px}
.g-t{font:bold 10px "DejaVu Sans",sans-serif;text-anchor:middle;fill:#161616}
.navbtns{position:absolute;left:1452px;top:141px;display:flex;flex-direction:column;gap:2.300px}
.nav{width:28px;height:28px;border-radius:50%;background:rgba(40,40,40,.55);display:flex;align-items:center;justify-content:center;color:#eee}

.side-tabs{position:absolute;left:1609px;top:50px;bottom:0;right:0;background:#2b2b2b;display:flex;flex-direction:column;gap:6px;padding-top:7px}
.stab{width:16px;background:#323232;color:#c8c8c8;border-radius:0 4px 4px 0;writing-mode:vertical-rl;transform:rotate(180deg);display:flex;align-items:center;justify-content:center}
.stab.on{background:#454545;color:#e8e8e8}
.h37{height:37px}.h33{height:33px}.h39{height:39px}.h47{height:47px}.h55{height:55px}

.xform{position:absolute;left:1488px;top:51px;width:121px;height:388px;background:#2f2f2f;display:flex;flex-direction:column;border-radius:4px 0 0 4px}
.xf-head{height:24px;background:#3f3f3f;display:flex;align-items:center;padding:0 7px 0 9px;color:#e0e0e0;font-size:11px;flex:none}
.tri{width:9px;height:9px;color:#a9a9a9;margin-right:5px}
.grip{width:11px;height:6px;margin-left:auto;background:radial-gradient(circle,#8c8c8c .8px,transparent 1.100px) 0 0/3px 3px}
.xf-body{padding:0 0 0 8px}
.xf-l{height:18px;line-height:18px;margin:4px 0 1px;padding-left:1px;color:#dcdcdc}
.xf-l.first{margin-top:9px}
.xf-l.l-scale{margin-top:3px}
.xf-r{display:flex;align-items:center;height:19px;margin-bottom:1px}
.xf-f{width:78px;height:19px;background:#545454;display:flex;align-items:center;padding:0 14px 0 17px;color:#e4e4e4}
.xf-r.wide .xf-f{width:104px}
.xf-f b{font-weight:400;width:12px}.xf-f em{font-style:normal;margin-left:auto}
.xf-r:nth-of-type(n) .xf-f{border-radius:0}
.xf-l + .xf-r .xf-f{border-radius:4px 4px 0 0}
.lock{width:15px;height:15px;margin-left:11px;color:#aaa}
.xf-dd{width:105px;height:20px;margin:3px 0 0;background:#282828;border-radius:4px;display:flex;align-items:center;padding:0 5px 0 8px;color:#dcdcdc;justify-content:space-between}

.timeline{height:76px;border-radius:6px 6px 0 0;overflow:hidden;flex:none;background:#3d3d3d;display:flex;flex-direction:column}
.tl-head{height:25px;display:flex;align-items:center;padding-left:6px;flex:none}
.tl-left{width:716px;display:flex;align-items:center;flex:none}
.tl-left .w68,.tl-left .w59{padding:0 6px 0 0;justify-content:flex-start}
.tl-left .w68 .lbl{margin-left:4px}.tl-left .w59 .lbl{margin-left:7px}
.sq-r{border-radius:4px 0 0 4px}.sq-l{border-radius:0 4px 4px 0}
.tl-menu{color:#ddd}.m-view{margin-left:10px}.m-marker{margin-left:16px}
.tl-right{margin-left:auto;display:flex;align-items:center;margin-right:5px}
.num{height:19px;background:#545454;display:flex;align-items:center;justify-content:center;color:#e0e0e0;border-radius:4px;flex:none}
.num.split{justify-content:space-between;padding:0 12px 0 16px}
.trans .sg{flex:1;width:auto;border-right:1px solid #3d3d3d}
.tl-scrub{height:23px;background:#2d2d2d;display:flex;align-items:center;padding:1px 0 0 22px;position:relative;color:#c2c2c2;flex:none}
.tl-scrub span{width:60.700px;text-align:center;flex:none}
.tl-pill{position:absolute;left:423px;top:3px;width:24px;height:17px;background:#4772b3;border-radius:4px;color:#fff;font-weight:400;display:flex;align-items:center;justify-content:center}
.tl-body{flex:1;position:relative;background-color:#404040;background-image:repeating-linear-gradient(90deg,#2c2c2c 0,#2c2c2c 1px,transparent 1px,transparent 60.700px),repeating-linear-gradient(90deg,#373737 0,#373737 1px,transparent 1px,transparent 30.350px);background-position:52.500px 0}
.tl-out{position:absolute;top:0;bottom:0;background:#333}
.tl-out.left{left:0;width:52px}.tl-out.right{left:1570px;right:0}
.tl-head-line{position:absolute;left:434px;top:0;bottom:0;width:2px;background:#4772b3}
.tl-scroll{position:absolute;left:6px;right:8px;top:16px;height:9px;background:#686868;border-radius:5px}

.outliner{height:321px;background:#282828;border-radius:6px;overflow:hidden;flex:none}
.ol-head{height:25px;background:#3d3d3d;display:flex;align-items:center;padding-left:9px}
.srch{height:19px;background:#1d1d1d;border-radius:5px;display:flex;align-items:center;padding-left:6px;color:#ddd;flex:none}
.ol-s{width:110px;margin-left:18px}
.lite{background:#585858;border-color:#585858}
.ol-body{padding-top:2px}
.ol-row{height:20px;display:flex;align-items:center;color:#c6c6c6;position:relative}
.r-scene{padding-left:24px;gap:7px}
.r-coll{padding-left:25px}
.tri2{width:9px;height:9px;color:#b0b0b0}
.icbox{width:18px;height:18px;margin:0 5px 0 8px;border-radius:4px;background:#3c3c3c;border:1px solid #555;display:flex;align-items:center;justify-content:center}
.r-obj{background:#344f80;padding-left:46px;height:20px}
.vline{position:absolute;left:29px;top:4px;width:1px;height:12px;background:#5d6d88}
.icmesh{width:21px;height:19px;margin:0 4px 0 5px;border-radius:4px;background:#37598f;background-image:radial-gradient(#6688c0 .6px,transparent .9px);background-size:2px 2px;display:flex;align-items:center;justify-content:center}
.oname{color:#f0962e;letter-spacing:-.25px}
.ol-ctl{position:absolute;right:9px;top:2px;display:flex;align-items:center;gap:5px;color:#e8e8e8;height:16px}
.chk{width:10px;height:10px;background:#e0e0e0;border-radius:2px;margin-right:3px;display:block}

.props{flex:1;border-radius:6px;overflow:hidden;display:flex;flex-direction:column;background:#424242;min-height:0}
.pr-head{height:25px;background:#3d3d3d;display:flex;align-items:center;padding-left:9px;flex:none}
.pr-s{width:109px;margin-left:45px}
.pr-dd{margin-left:65px}
.pr-main{flex:1;display:flex;min-height:0}
.pr-nav{width:28px;background:#202020;display:flex;flex-direction:column;padding-top:5px;gap:2px;flex:none;align-items:flex-end}
.ptab{width:26px;height:26px;background:#2b2b2b;border-radius:4px 0 0 4px;display:flex;align-items:center;justify-content:center;color:#d8d8d8;flex:none}
.ptab.t30{height:30px}
.ptab.gap{margin-top:8px}
.ptab.on{background:#424242;color:#fff}
.ptab.red{color:#c56a57}.ptab.blu{color:#4b7cc6}
.pr-content{flex:1;background:#424242;min-width:0}
.ctx{height:39px;display:flex;align-items:center;padding:0 8px 3px 11px;color:#dcdcdc}
.ctx span{margin-left:9px}
.pinic{margin-left:auto;color:#8a8a8a}
.ph{display:flex;align-items:center;padding:0 7px 0 7px;color:#cfcfcf;background:#444;font-size:10.9px}
.ph .tri{margin-right:6px}
.h21{height:21px}.h24{height:24px}
.closed{background:transparent}
.pb{background:#3c3c3c;padding:9px 7px 9px 0}
.pb-scene{padding-bottom:10px}
.pb-units{padding:8px 7px 10px 0}
.row{display:grid;grid-template-columns:99px 140px;column-gap:11px;height:18px;align-items:center}
.pb-scene .row + .row{margin-top:7px}
.row label{text-align:right;white-space:nowrap;overflow:hidden;color:#dcdcdc;padding-left:8px}
.fld{height:18px;background:#1e1e1e;border-radius:4px;display:flex;align-items:center;padding:0 4px;justify-content:space-between;color:#e0e0e0}
.dd{height:18px;background:#282828;border-radius:4px;display:flex;align-items:center;justify-content:space-between;padding:0 2px 0 8px;color:#dcdcdc;border:1px solid #323232}
.nf{height:18px;background:#545454;border-radius:4px;display:flex;align-items:center;justify-content:center;color:#e6e6e6}
.m8t{margin-top:7px}.m10t{margin-top:10px}.m4t{margin-top:4px}
.chkrow{height:12px;margin-top:7px}
.cb{display:flex;align-items:center;color:#dcdcdc}
.cb i{width:12px;height:12px;background:#545454;border-radius:3px;margin-right:4px}
.cbk{width:12px;height:12px;background:#4772b3;border-radius:2px;margin:0 3px 0 -1px;display:block}
.cbk + .nt{color:#cfcfcf}

.status{height:20px;background:#2c2c2c;flex:none;display:flex;align-items:center;position:relative;padding-bottom:1px;color:#b8b8b8;margin-top:1px}
.st{width:236px;display:flex;align-items:center;padding-left:12px;flex:none}
.ms{width:11px;height:15px;color:#c0c0c0;margin-right:11px}
.ver{margin-left:auto;margin-right:8px;color:#aaa}
.edge{position:absolute;bottom:0;height:2px}
.e1{left:48px;width:287px;background:#fff}.e2{left:534px;width:48px;background:#666}
```

FILE: app.js
```js
(function () {
  // ground grid in perspective: vanishing points measured from the reference
  var O = [770.5, 536], VA = [-4500, -825], VB = [1395, -929], a = 0.00398, b = 0.0097;
  function ext(V, P) { var t = 9; return 'M' + V[0] + ' ' + V[1] + 'L' + (V[0] + (P[0] - V[0]) * t).toFixed(0) + ' ' + (V[1] + (P[1] - V[1]) * t).toFixed(0); }
  function fam1(v) { var w = 1 + b * v; return ext(VA, [(b * v * VB[0] + O[0]) / w, (b * v * VB[1] + O[1]) / w]); }
  function fam2(u) { var w = 1 + a * u; return ext(VB, [(a * u * VA[0] + O[0]) / w, (a * u * VA[1] + O[1]) / w]); }
  var major = '', minor = '', i;
  for (i = -60 * 5; i < 90 * 5; i++) { if (i % 5 === 0) major += fam1(i / 5); else if (i < 8 * 5) minor += fam1(i / 5); }
  for (i = -110 * 5; i < 130 * 5; i++) { if (i % 5 === 0) major += fam2(i / 5); else if (i < 40 * 5) minor += fam2(i / 5); }
  document.getElementById('grid').setAttribute('d', major);
  document.getElementById('gridm').setAttribute('d', minor);

  // mesh, described in the coordinates of the 2.45 / 2.8 scaled crop
  function M(p) { return [460 + p[0] / 2.45, 300 + p[1] / 2.8]; }
  function corners(pts, r, passes) {
    var q = pts;
    for (var p = 0; p < passes; p++) {
      var n = [];
      for (var j = 0; j < q.length; j++) {
        var s = q[j], e = q[(j + 1) % q.length];
        n.push([s[0] + (e[0] - s[0]) * r, s[1] + (e[1] - s[1]) * r], [s[0] + (e[0] - s[0]) * (1 - r), s[1] + (e[1] - s[1]) * (1 - r)]);
      }
      q = n;
    }
    return q;
  }
  function pathOf(real) { return 'M' + real.map(function (m) { return m[0].toFixed(1) + ' ' + m[1].toFixed(1); }).join('L') + 'Z'; }
  function poly(pts, fill, extra) { return '<path d="' + pathOf(pts.map(M)) + '" fill="' + fill + '"' + (extra || '') + '/>'; }
  function g(v) { v = Math.max(64, Math.min(222, Math.round(v))); return 'rgb(' + v + ',' + v + ',' + v + ')'; }
  var seed = 11; function rnd() { seed = (seed * 16807) % 2147483647; return seed / 2147483647; }
  var RAD = Math.PI / 180;

  var out = [[750,35],[790,45],[815,70],[845,95],[880,75],[925,70],[970,95],[1040,115],[1080,150],[1135,182],[1200,168],[1250,172],[1280,215],[1305,250],[1310,300],[1335,318],[1345,335],[1405,365],[1425,400],[1445,440],[1465,475],[1475,530],[1480,600],[1480,690],[1510,760],[1530,830],[1530,870],[1480,920],[1475,960],[1485,1010],[1445,1065],[1458,1120],[1450,1180],[1400,1230],[1370,1265],[1320,1305],[1265,1298],[1220,1345],[1155,1390],[1135,1430],[1085,1478],[990,1470],[900,1490],[780,1510],[650,1495],[560,1470],[440,1440],[390,1460],[340,1430],[300,1350],[280,1310],[210,1255],[160,1250],[120,1190],[110,1150],[125,1085],[60,1015],[40,950],[35,820],[65,775],[30,700],[30,640],[80,575],[60,510],[55,450],[125,345],[240,325],[260,285],[345,245],[355,215],[410,170],[520,125],[650,95],[680,55]];
  var outline = pathOf(corners(out.map(M), .22, 2));
  document.getElementById('outclipp').setAttribute('d', outline);

  var h = '<g clip-path="url(#outclip)"><path d="' + outline + '" fill="#9a9a9a"/>';
  var cx = 776, cy = 470, th, st;

  // outer lobes: broad, soft shading that runs down the skirt
  st = '';
  for (th = 0; th < 360; th += 1) {
    var low = th > 15 && th < 165;
    var val0 = low ? 150 + 22 * Math.cos(th * RAD * 21 + .6) + 10 * Math.sin(th * RAD * 47 + 1) : 146 + 10 * Math.cos(th * RAD * 23) + 5 * Math.sin(th * RAD * 51);
    st += '<path d="M' + cx + ' ' + cy + 'L' + (cx + Math.cos(th * RAD) * 520).toFixed(1) + ' ' + (cy + Math.sin(th * RAD) * 520).toFixed(1) + 'L' + (cx + Math.cos((th + 1.4) * RAD) * 520).toFixed(1) + ' ' + (cy + Math.sin((th + 1.4) * RAD) * 520).toFixed(1) + 'Z" fill="' + g(val0) + '"/>';
  }
  h += '<g filter="url(#b3)">' + st + '</g>';
  h += '<path d="' + outline + '" fill="url(#shade)"/>';

  // dark gaps between the lobes at the foot of the skirt
  h += '<g filter="url(#b2)" fill="none" stroke="#5d5d5d" stroke-width="5" opacity=".75" stroke-linecap="round">';
  [[[445,1330],[420,1440]],[[610,1340],[600,1450]],[[800,1350],[805,1490]],[[950,1340],[960,1470]],[[1150,1290],[1180,1370]],[[1260,1220],[1300,1290]],[[300,1240],[280,1300]],[[125,1050],[140,1200]]].forEach(function (l) {
    var s = M(l[0]), e = M(l[1]);
    h += '<path d="M' + s[0].toFixed(1) + ' ' + s[1].toFixed(1) + 'L' + e[0].toFixed(1) + ' ' + e[1].toFixed(1) + '"/>';
  });
  h += '</g>';

  // fine folds of the skirt, ending in a stepped edge
  st = ''; cy = 500;
  var hold = 0, stepv = 1;
  for (th = 0; th < 360; th += .8) {
    if (hold <= 0) { stepv = .95 + rnd() * .09; hold = 4 + rnd() * 10; }
    hold -= 1;
    var lower = th > 25 && th < 155, side = (th >= 155 && th < 225) || th >= 335 || th <= 25;
    var base = lower ? 156 : (side ? 152 : 152), amp = lower ? 30 : (side ? 14 : 6);
    if (th > 90 && th < 150) base = 164;
    if (th > 25 && th < 55) base = 148;
    var warp = 1.6 * Math.sin(th * RAD * 5);
    var val = base + amp * (.5 * Math.sin(th * RAD * 23 + warp) + .45 * Math.sin(th * RAD * 41 + 1 + warp) + .4 * Math.sin(th * RAD * 89 + 2)) + (rnd() - .5) * (lower ? 9 : 4);
    var ex = 300, ey = 272;
    if (!lower && !side) { ex = 340; ey = 310; }
    var t0 = th * RAD, t1 = (th + 1.1) * RAD;
    st += '<path d="M' + cx + ' ' + cy + 'L' + (cx + Math.cos(t0) * ex * stepv).toFixed(1) + ' ' + (cy + Math.sin(t0) * ey * stepv).toFixed(1) + 'L' + (cx + Math.cos(t1) * ex * stepv).toFixed(1) + ' ' + (cy + Math.sin(t1) * ey * stepv).toFixed(1) + 'Z" fill="' + g(val) + '"/>';
  }
  h += '<g filter="url(#b1)">' + st + '</g>';

  // hand placed highlights and shadows of the skirt
  h += '<g filter="url(#b2)">';
  h += poly([[280,900],[400,860],[420,980],[320,1130],[250,1060]], '#c6c6c6', ' opacity=".35"');
  h += poly([[1180,1000],[1290,900],[1340,980],[1260,1120],[1210,1080]], '#c8c8c8', ' opacity=".35"');
  h += poly([[740,1040],[830,1020],[840,1300],[740,1300]], '#c8c8c8', ' opacity=".25"');
  h += poly([[540,1040],[590,1000],[560,1120],[490,1240],[450,1230]], '#c8c8c8', ' opacity=".3"');
  h += poly([[900,960],[950,960],[1040,1230],[960,1270]], '#6f6f6f', ' opacity=".3"');
  h += poly([[700,980],[730,980],[710,1270],[660,1280]], '#6a6a6a', ' opacity=".35"');
  h += poly([[1040,900],[1090,880],[1170,1200],[1100,1240]], '#727272', ' opacity=".35"');
  h += poly([[590,1000],[610,900],[585,970],[545,1040],[530,1100]], '#505050', ' opacity=".7"');
  h += poly([[1200,780],[1300,800],[1420,980],[1310,920]], '#7a7a7a', ' opacity=".35"');
  h += poly([[100,560],[260,520],[240,620],[70,740]], '#a6a6a6', ' opacity=".3"');
  h += poly([[1230,390],[1440,450],[1440,560],[1250,470]], '#aeaeae', ' opacity=".4"');
  h += poly([[950,110],[1080,160],[1040,230],[930,170]], '#6c6c6c', ' opacity=".5"');
  h += poly([[690,60],[770,50],[810,125],[680,125]], '#858585', ' opacity=".7"');
  h += poly([[755,55],[775,60],[778,120],[760,120]], '#bdbdbd', ' opacity=".6"');
  h += poly([[1040,220],[1250,190],[1300,290],[1150,270]], '#9c9c9c', ' opacity=".6"');
  h += poly([[470,140],[560,150],[520,170],[470,160]], '#666', ' opacity=".5"');
  h += '</g>';

  // thin dark creases that fall from the rim
  h += '<g filter="url(#b1)">';
  [[[615,870],[630,900],[572,975]],[[765,900],[785,915],[745,975]],[[905,815],[935,860],[935,960]],[[1075,785],[1110,810],[1165,880]],[[495,775],[470,810],[405,860]],[[300,715],[325,722],[270,770]]].forEach(function (c) {
    h += poly(c, '#666');
  });
  h += '</g>';
  [[[1160,640],[1230,700],[1090,640]],[[1005,240],[1060,260],[1030,280]]].forEach(function (c, n) {
    h += poly(c, n ? '#3a3a3a' : '#6e6e6e');
  });

  // flat scalloped rim
  var rim = [[690,125],[830,122],[915,150],[930,172],[1010,150],[1030,200],[1010,250],[1050,275],[1150,270],[1160,330],[1200,370],[1230,480],[1240,560],[1210,620],[1160,640],[1150,680],[1170,740],[1080,790],[1060,880],[960,860],[860,950],[770,930],[700,960],[640,930],[610,870],[510,900],[490,800],[400,790],[290,700],[270,600],[280,470],[350,410],[360,330],[440,240],[560,170]];
  var rimReal = corners(rim.map(M), .22, 2);
  h += '<path d="' + pathOf(rimReal) + '" fill="#a0a0a0"/>';
  // jagged hair-like teeth along the rim edge
  var sp = '';
  for (var q = 0; q < rimReal.length; q++) {
    var A = rimReal[q], B = rimReal[(q + 1) % rimReal.length], dx = A[0] - 776, dy = A[1] - 483, L = Math.sqrt(dx * dx + dy * dy);
    var seg = Math.sqrt((B[0] - A[0]) * (B[0] - A[0]) + (B[1] - A[1]) * (B[1] - A[1])), cnt = Math.floor(seg / 4.5);
    for (var c = 0; c < cnt; c++) {
      var f = c / Math.max(cnt, 1), px = A[0] + (B[0] - A[0]) * f, py = A[1] + (B[1] - A[1]) * f, ln = Math.pow(rnd(), 2.2) * 15;
      if (dy < -60 && dx < 40) ln *= .3;
      sp += 'M' + (px - dy / L * 2.4).toFixed(1) + ' ' + (py + dx / L * 2.4).toFixed(1) + 'L' + (px + dx / L * ln).toFixed(1) + ' ' + (py + dy / L * ln).toFixed(1) + 'L' + (px + dy / L * 2.4).toFixed(1) + ' ' + (py - dx / L * 2.4).toFixed(1) + 'Z';
    }
  }
  h += '<path d="' + sp + '" fill="#a0a0a0"/>';

  // bowl
  h += '<ellipse cx="767" cy="487.500" rx="162" ry="127" fill="url(#ringg)"/>';
  h += '<ellipse cx="776" cy="483" rx="153" ry="121" fill="#a2a2a2"/>';
  // facets of the bowl
  var r0 = [.99,.83,.67,.51,.35], c0 = 776, c1 = 483;
  for (var j = 0; j < r0.length - 1; j++) {
    for (var k = -160; k < 40; k += 13) {
      var ta = k * RAD, tb = (k + 13.5) * RAD, ra = r0[j], rb = r0[j + 1];
      var peak = Math.exp(-Math.pow((k + 60) / 40, 2)), lev = 162 + peak * (30 - j * 8) + ((k * 7 + j * 13 + 400) % 4);
      h += '<path d="M' + (c0 + Math.cos(ta) * 153 * ra).toFixed(1) + ' ' + (c1 + Math.sin(ta) * 121 * ra).toFixed(1) +
        'L' + (c0 + Math.cos(tb) * 153 * ra).toFixed(1) + ' ' + (c1 + Math.sin(tb) * 121 * ra).toFixed(1) +
        'L' + (c0 + Math.cos(tb) * 153 * rb).toFixed(1) + ' ' + (c1 + Math.sin(tb) * 121 * rb).toFixed(1) +
        'L' + (c0 + Math.cos(ta) * 153 * rb).toFixed(1) + ' ' + (c1 + Math.sin(ta) * 121 * rb).toFixed(1) +
        'Z" fill="' + g(lev) + '"/>';
    }
  }
  h += '</g>';
  h += '<path d="' + outline + '" fill="none" stroke="#ea8a2e" stroke-width="1.900" stroke-linejoin="round"/>';

  // axis seen through the underside, 3D cursor and origin
  h += '<path d="M660 800L640 838" stroke="#7d5a56" stroke-width="1.200"/>';
  h += '<g transform="translate(771 534)"><circle r="9.500" fill="none" stroke="#fff" stroke-width="1.600" stroke-dasharray="6 3"/><circle r="9.500" fill="none" stroke="#c4483c" stroke-width="1.600" stroke-dasharray="3 6" stroke-dashoffset="6"/>' +
    '<path d="M-18-4L-9-1.500M9 1.500L18 4M6-13.500L3.500-7M-3.500 7L-6 14.500" stroke="#151515" stroke-width="1"/><circle r="2.400" fill="#f0861e" stroke="#2a2a2a" stroke-width=".5"/></g>';

  document.getElementById('mesh3d').innerHTML = h;
})();
```
